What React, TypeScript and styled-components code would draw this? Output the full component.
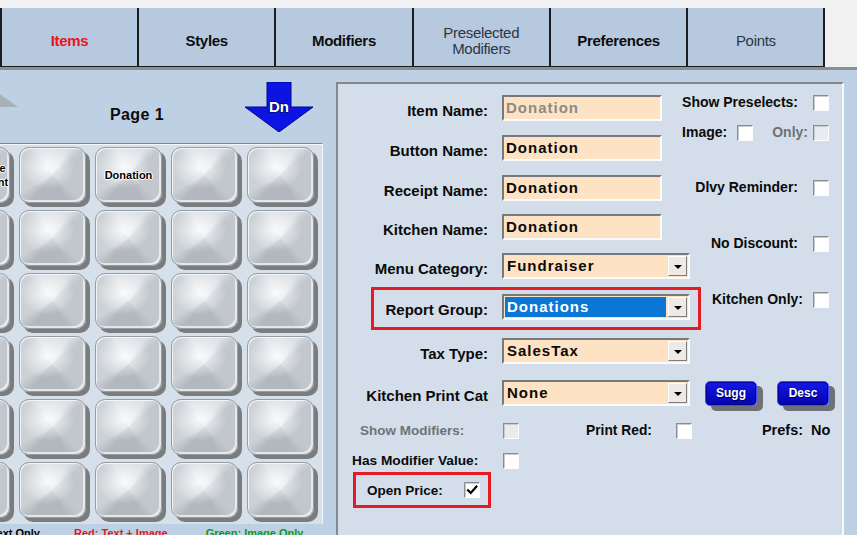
import React from "react";
import styled, { createGlobalStyle } from "styled-components";

const GlobalStyle = createGlobalStyle`
  html, body {
    margin: 0;
    padding: 0;
    background: #f1f1f1;
  }
  body {
    font-family: "Liberation Sans", Arial, sans-serif;
    color: #000;
  }
`;

const FONT = `"Liberation Sans", Arial, sans-serif`;

/* ---------- frame ---------- */

const Screen = styled.div`
  width: 857px;
  height: 535px;
  overflow: hidden;
  display: flex;
  flex-direction: column;
  background: #bed0e4;
`;

/* ---------- tab strip ---------- */

const TabBar = styled.div`
  flex: 0 0 70px;
  box-sizing: border-box;
  padding-top: 8px;
  display: flex;
  background: #f1f1f1;
  border-bottom: 3px solid #8b8e92;
`;

type TabTone = "active" | "normal" | "muted";

const Tab = styled.div<{ $tone: TabTone }>`
  flex: 0 0 137.3px;
  box-sizing: border-box;
  display: flex;
  align-items: center;
  justify-content: center;
  padding-top: 7px;
  background: #b7c9de;
  border-right: 2px solid #1d1d1d;
  border-bottom: 1px solid #1d1d1d;
  white-space: pre-line;
  text-align: center;
  font-family: ${FONT};
  font-size: 15px;
  line-height: 16px;
  letter-spacing: -0.3px;
  font-weight: ${(p) => (p.$tone === "muted" ? 400 : 700)};
  color: ${(p) =>
    p.$tone === "active" ? "#e8151b" : p.$tone === "muted" ? "#2a3646" : "#0d0d0d"};

  &:first-child {
    flex-basis: 139px;
    border-left: 2px solid #1d1d1d;
  }
`;

/* ---------- body ---------- */

const Body = styled.div`
  flex: 1;
  display: flex;
  min-height: 0;
`;

const LeftColumn = styled.div`
  flex: 0 0 325px;
  min-width: 0;
  display: flex;
  flex-direction: column;
`;

const PageHeader = styled.div`
  flex: 0 0 73px;
  box-sizing: border-box;
  display: flex;
  align-items: flex-start;
  padding: 12px 12px 0 0;
`;

const ArrowSvg = styled.svg<{ $shift?: number }>`
  flex: 0 0 68px;
  width: 68px;
  height: 50px;
  margin-left: ${(p) => p.$shift ?? 0}px;
`;

const PageLabel = styled.div`
  flex: 1;
  margin-top: 24px;
  padding-left: 11px;
  text-align: center;
  font-family: ${FONT};
  font-weight: 700;
  font-size: 16px;
  line-height: 18px;
  letter-spacing: 0.4px;
  color: #0b0b0b;
`;

const KeyPanel = styled.div`
  flex: 0 0 381px;
  width: 323px;
  box-sizing: border-box;
  overflow: hidden;
  background: #d5e0eb;
  border-top: 1px solid #7e8995;
  border-right: 1px solid #f5f8fb;
  box-shadow: inset 0 1px 0 #f4f7fa;
  padding-top: 3px;
`;

const KeyGrid = styled.div`
  display: grid;
  grid-template-columns: repeat(5, 67px);
  grid-auto-rows: 56px;
  column-gap: 9px;
  row-gap: 7px;
  margin-left: -57px;
`;

const Key = styled.div`
  box-sizing: border-box;
  width: 67px;
  height: 56px;
  border-radius: 10px;
  border: 1px solid #959ca3;
  background:
    radial-gradient(ellipse 42% 40% at 42% 36%, rgba(255, 255, 255, 0.85), rgba(255, 255, 255, 0) 100%),
    conic-gradient(
      from 52deg at 50% 50%,
      #c1c7cd 0deg 78deg,
      #b2b8be 100deg 168deg,
      #ccd1d6 190deg 258deg,
      #dde1e5 280deg 340deg,
      #c1c7cd 360deg
    );
  box-shadow:
    inset -2px -2px 0 rgba(236, 239, 242, 0.85),
    inset 1px 1px 0 rgba(245, 247, 249, 0.9),
    4px 4px 0 #7b7c7e;
  display: flex;
  align-items: center;
  justify-content: center;
  text-align: center;
  white-space: pre-line;
  font-family: ${FONT};
  font-weight: 700;
  font-size: 11px;
  line-height: 14px;
  color: #000;
  text-shadow: 1px 0 #fff, -1px 0 #fff, 0 1px #fff, 0 -1px #fff;
`;

const Legend = styled.div`
  display: flex;
  margin-top: 3px;
  white-space: nowrap;
  font-family: ${FONT};
  font-weight: 700;
  font-size: 11px;
  line-height: 13px;
`;

const LegendItem = styled.span<{ $color: string; $lead: number; $width?: number }>`
  color: ${(p) => p.$color};
  margin-left: ${(p) => p.$lead}px;
  ${(p) => (p.$width ? `flex: 0 0 ${p.$width}px; text-align: right;` : "")}
`;

/* ---------- item editor panel ---------- */

const EditorPanel = styled.div`
  flex: 0 0 508px;
  min-width: 0;
  box-sizing: border-box;
  margin: 12px 0 0 11px;
  height: 480px;
  background: #d3deea;
  border-style: solid;
  border-width: 2px;
  border-color: #85898e #f7f9fb #f7f9fb #85898e;
  display: flex;
  flex-direction: column;
`;

const TopSection = styled.div`
  display: flex;
  min-width: 0;
`;

const FieldsColumn = styled.div`
  flex: 0 0 352px;
  display: flex;
  flex-direction: column;
  padding-top: 11px;
`;

const FieldRow = styled.div<{ $mt?: number; $highlight?: boolean; $extras?: boolean }>`
  position: relative;
  display: grid;
  grid-template-columns: ${(p) => (p.$extras ? "150px auto auto auto" : "150px auto")};
  justify-content: start;
  column-gap: 14px;
  align-items: center;
  height: 26px;
  margin-top: ${(p) => p.$mt ?? 0}px;

  ${(p) =>
    p.$highlight
      ? `
  &::after {
    content: "";
    position: absolute;
    top: -7px;
    bottom: -10px;
    left: 33px;
    right: -11px;
    border: 3px solid #e41c24;
    pointer-events: none;
  }`
      : ""}
`;

const FieldLabel = styled.label`
  text-align: right;
  white-space: nowrap;
  padding-top: 6px;
  font-family: ${FONT};
  font-weight: 700;
  font-size: 15px;
  line-height: 18px;
  color: #0a0a0a;
`;

const sunken = `
  box-sizing: border-box;
  border-style: solid;
  border-width: 2px;
  border-color: #76797d #fbfbfb #fbfbfb #76797d;
  background: #fde3c3;
`;

const TextField = styled.div<{ $dim?: boolean }>`
  ${sunken}
  width: 160px;
  height: 26px;
  padding: 1px 0 0 2px;
  font-family: ${FONT};
  font-weight: 700;
  font-size: 15px;
  line-height: 20px;
  letter-spacing: 1px;
  color: ${(p) => (p.$dim ? "#8d8a86" : "#0a0a0a")};
`;

const SelectBox = styled.div`
  ${sunken}
  width: 188px;
  height: 26px;
  display: flex;
  padding: 1px;
`;

const SelectValue = styled.div<{ $chosen?: boolean }>`
  flex: 1;
  padding: 0 0 0 2px;
  font-family: ${FONT};
  font-weight: 700;
  font-size: 15px;
  line-height: 20px;
  letter-spacing: 1px;
  color: ${(p) => (p.$chosen ? "#ffffff" : "#0a0a0a")};
  background: ${(p) => (p.$chosen ? "#0a77d6" : "transparent")};
  margin-right: 2px;
`;

const DropButton = styled.div`
  flex: 0 0 19px;
  box-sizing: border-box;
  background: #eeebe6;
  border-style: solid;
  border-width: 1px;
  border-color: #ffffff #7c7c7c #7c7c7c #ffffff;
  display: flex;
  align-items: center;
  justify-content: center;

  &::after {
    content: "";
    width: 0;
    height: 0;
    border-left: 4px solid transparent;
    border-right: 4px solid transparent;
    border-top: 4px solid #000;
    margin-top: 1px;
  }
`;

const ChecksColumn = styled.div`
  flex: 1;
  min-width: 0;
  display: flex;
  flex-direction: column;
  align-items: flex-end;
  padding-right: 13px;
`;

const CheckRow = styled.div<{ $mt: number }>`
  display: flex;
  flex-shrink: 0;
  align-items: center;
  height: 17px;
  margin-top: ${(p) => p.$mt}px;
`;

const SmallLabel = styled.span<{ $dim?: boolean; $lead?: number; $gap?: number; $size?: number }>`
  white-space: nowrap;
  font-family: ${FONT};
  font-weight: 700;
  font-size: ${(p) => p.$size ?? 14}px;
  line-height: 17px;
  color: ${(p) => (p.$dim ? "#6f7276" : "#0a0a0a")};
  margin-left: ${(p) => p.$lead ?? 0}px;
  margin-right: ${(p) => p.$gap ?? 15}px;
`;

const Box = styled.span<{ $disabled?: boolean }>`
  flex: 0 0 16px;
  width: 16px;
  height: 16px;
  box-sizing: border-box;
  border-style: solid;
  border-width: 1px;
  border-color: #8a8c8f #fdfdfd #fdfdfd #8a8c8f;
  box-shadow: inset 1px 1px 0 #c9cbce;
  background: ${(p) => (p.$disabled ? "#e9ebee" : "#ffffff")};
  display: flex;
  align-items: center;
  justify-content: center;
`;

const LowerRow = styled.div<{ $mt: number }>`
  display: flex;
  align-items: center;
  margin-top: ${(p) => p.$mt}px;
`;

const CaptionCell = styled.div<{ $indent: number }>`
  flex: 0 0 165px;
  box-sizing: border-box;
  padding-left: ${(p) => p.$indent}px;
  display: flex;
`;

const ActionButton = styled.button<{ $lead: number }>`
  box-sizing: border-box;
  width: 52px;
  height: 25px;
  margin-left: ${(p) => p.$lead}px;
  padding: 0;
  border-radius: 5px;
  border: 1px solid #3b4dff;
  background: linear-gradient(180deg, #1518e6 0%, #0a0cc8 55%, #0506a8 100%);
  box-shadow: inset 0 0 0 1px #0000a0, 6px 5px 0 #6f7174;
  color: #ffffff;
  font-family: ${FONT};
  font-weight: 700;
  font-size: 12px;
  line-height: 14px;
  text-shadow: 1px 1px 0 #000050;
`;

const OpenPriceBox = styled.div`
  align-self: flex-start;
  display: flex;
  align-items: center;
  box-sizing: border-box;
  height: 36px;
  margin: 3px 0 0 15px;
  padding: 0 8px 0 11px;
  border: 3px solid #e41c24;
`;

/* ---------- data ---------- */

const TABS: { label: string; tone: TabTone }[] = [
  { label: "Items", tone: "active" },
  { label: "Styles", tone: "normal" },
  { label: "Modifiers", tone: "normal" },
  { label: "Preselected\nModifiers", tone: "muted" },
  { label: "Preferences", tone: "normal" },
  { label: "Points", tone: "muted" },
];

const KEY_LABELS: Record<number, string> = {
  0: "Open Price\nGift Amount",
  2: "Donation",
};

const Check = () => (
  <svg width="12" height="12" viewBox="0 0 12 12">
    <path d="M2 6.2 L4.8 9 L10.4 2.6" fill="none" stroke="#000" strokeWidth="2.2" strokeLinecap="square" />
  </svg>
);

const Select = ({ value, chosen }: { value: string; chosen?: boolean }) => (
  <SelectBox>
    <SelectValue $chosen={chosen}>{value}</SelectValue>
    <DropButton />
  </SelectBox>
);

export default function App() {
  return (
    <>
      <GlobalStyle />
      <Screen>
        <TabBar>
          {TABS.map((t) => (
            <Tab key={t.label} $tone={t.tone}>
              {t.label}
            </Tab>
          ))}
        </TabBar>

        <Body>
          <LeftColumn>
            <PageHeader>
              {/* page-up arrow, disabled on the first page */}
              <ArrowSvg $shift={-50} viewBox="0 0 68 50">
                <polygon points="34,1 68,25 46,25 46,50 22,50 22,25 0,25" fill="#a7afb9" />
              </ArrowSvg>
              <PageLabel>Page 1</PageLabel>
              <ArrowSvg viewBox="0 0 68 50">
                <polygon
                  points="22,0 46,0 46,25 68,25 34,50 0,25 22,25"
                  fill="#0b14e2"
                  stroke="#00078f"
                  strokeWidth="1"
                />
                <text
                  x="34"
                  y="30"
                  textAnchor="middle"
                  fontFamily="Liberation Sans, Arial, sans-serif"
                  fontWeight="700"
                  fontSize="15"
                  fill="#ffffff"
                  stroke="#00003a"
                  strokeWidth="1.2"
                  paintOrder="stroke"
                >
                  Dn
                </text>
              </ArrowSvg>
            </PageHeader>

            <KeyPanel>
              <KeyGrid>
                {Array.from({ length: 30 }, (_, i) => (
                  <Key key={i}>{KEY_LABELS[i] ?? ""}</Key>
                ))}
              </KeyGrid>
            </KeyPanel>

            <Legend>
              <LegendItem $color="#000000" $lead={-60} $width={100}>
                Black: Text Only
              </LegendItem>
              <LegendItem $color="#e8151b" $lead={34}>
                Red: Text + Image
              </LegendItem>
              <LegendItem $color="#0a9a12" $lead={38}>
                Green: Image Only
              </LegendItem>
            </Legend>
          </LeftColumn>

          <EditorPanel>
            <TopSection>
              <FieldsColumn>
                <FieldRow>
                  <FieldLabel>Item Name:</FieldLabel>
                  <TextField $dim>Donation</TextField>
                </FieldRow>
                <FieldRow $mt={14}>
                  <FieldLabel>Button Name:</FieldLabel>
                  <TextField>Donation</TextField>
                </FieldRow>
                <FieldRow $mt={14}>
                  <FieldLabel>Receipt Name:</FieldLabel>
                  <TextField>Donation</TextField>
                </FieldRow>
                <FieldRow $mt={13}>
                  <FieldLabel>Kitchen Name:</FieldLabel>
                  <TextField>Donation</TextField>
                </FieldRow>
                <FieldRow $mt={13}>
                  <FieldLabel>Menu Category:</FieldLabel>
                  <Select value="Fundraiser" />
                </FieldRow>
                <FieldRow $mt={15} $highlight>
                  <FieldLabel>Report Group:</FieldLabel>
                  <Select value="Donations" chosen />
                </FieldRow>
                <FieldRow $mt={18}>
                  <FieldLabel>Tax Type:</FieldLabel>
                  <Select value="SalesTax" />
                </FieldRow>
              </FieldsColumn>

              <ChecksColumn>
                <CheckRow $mt={10}>
                  <SmallLabel>Show Preselects:</SmallLabel>
                  <Box />
                </CheckRow>
                <CheckRow $mt={13}>
                  <SmallLabel $gap={10}>Image:</SmallLabel>
                  <Box />
                  <SmallLabel $dim $lead={19} $gap={5}>
                    Only:
                  </SmallLabel>
                  <Box $disabled />
                </CheckRow>
                <CheckRow $mt={38}>
                  <SmallLabel>Dlvy Reminder:</SmallLabel>
                  <Box />
                </CheckRow>
                <CheckRow $mt={39}>
                  <SmallLabel>No Discount:</SmallLabel>
                  <Box />
                </CheckRow>
                <CheckRow $mt={39}>
                  <SmallLabel $gap={10}>Kitchen Only:</SmallLabel>
                  <Box />
                </CheckRow>
              </ChecksColumn>
            </TopSection>

            <FieldRow $mt={16} $extras>
              <FieldLabel>Kitchen Print Cat</FieldLabel>
              <Select value="None" />
              <ActionButton $lead={1}>Sugg</ActionButton>
              <ActionButton $lead={6}>Desc</ActionButton>
            </FieldRow>

            <LowerRow $mt={16}>
              <CaptionCell $indent={22}>
                <SmallLabel $dim $size={13.5}>
                  Show Modifiers:
                </SmallLabel>
              </CaptionCell>
              <Box $disabled />
              <SmallLabel $lead={67} $gap={24} $size={13.8}>
                Print Red:
              </SmallLabel>
              <Box />
              <SmallLabel $lead={70} $gap={0} $size={14.5}>
                Prefs:&nbsp; No
              </SmallLabel>
            </LowerRow>

            <LowerRow $mt={13}>
              <CaptionCell $indent={14}>
                <SmallLabel $size={13.7}>Has Modifier Value:</SmallLabel>
              </CaptionCell>
              <Box />
            </LowerRow>

            <OpenPriceBox>
              <SmallLabel $size={13.5} $gap={21}>
                Open Price:
              </SmallLabel>
              <Box>
                <Check />
              </Box>
            </OpenPriceBox>
          </EditorPanel>
        </Body>
      </Screen>
    </>
  );
}
